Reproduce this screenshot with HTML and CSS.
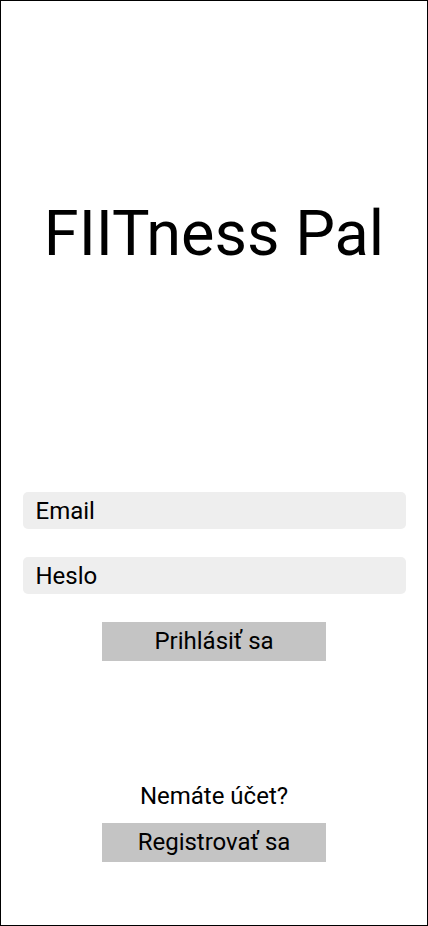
FILE: index.html
```html
<!DOCTYPE html>
<html lang="sk">
<head>
<meta charset="utf-8">
<title>FIITness Pal</title>
<link rel="stylesheet" href="styles.css">
</head>
<body>
<div class="screen">
  <h1 class="title">FIITness Pal</h1>
  <form class="login">
    <div class="field">Email</div>
    <div class="field">Heslo</div>
    <div class="btn">Prihlásiť sa</div>
  </form>
  <div class="register">
    <p class="hint">Nemáte účet?</p>
    <div class="btn">Registrovať sa</div>
  </div>
</div>
</body>
</html>
```
FILE: styles.css
```css
html, body {
  margin: 0;
  padding: 0;
  background: #fff;
}
.screen {
  box-sizing: border-box;
  width: 428px;
  height: 926px;
  border: 1px solid #000;
  font-family: Roboto, "Liberation Sans", sans-serif;
  color: #000;
  display: flex;
  flex-direction: column;
  align-items: center;
}
.title {
  margin: 196px 0 0;
  font-size: 63px;
  line-height: 74px;
  font-weight: 400;
}
.login {
  margin: 221px 0 0;
  width: 383px;
  display: flex;
  flex-direction: column;
  align-items: center;
  gap: 28px;
}
.field {
  box-sizing: border-box;
  width: 100%;
  height: 37px;
  line-height: 38px;
  padding: 0 12px 0 13px;
  background: #eeeeee;
  border-radius: 5px;
  font-size: 24px;
}
.btn {
  width: 224px;
  height: 39px;
  line-height: 39px;
  background: #c4c4c4;
  text-align: center;
  font-size: 24px;
}
.register {
  margin-top: 121px;
  display: flex;
  flex-direction: column;
  align-items: center;
}
.hint {
  margin: 0 0 13px;
  font-size: 24px;
  line-height: 28px;
}
```
